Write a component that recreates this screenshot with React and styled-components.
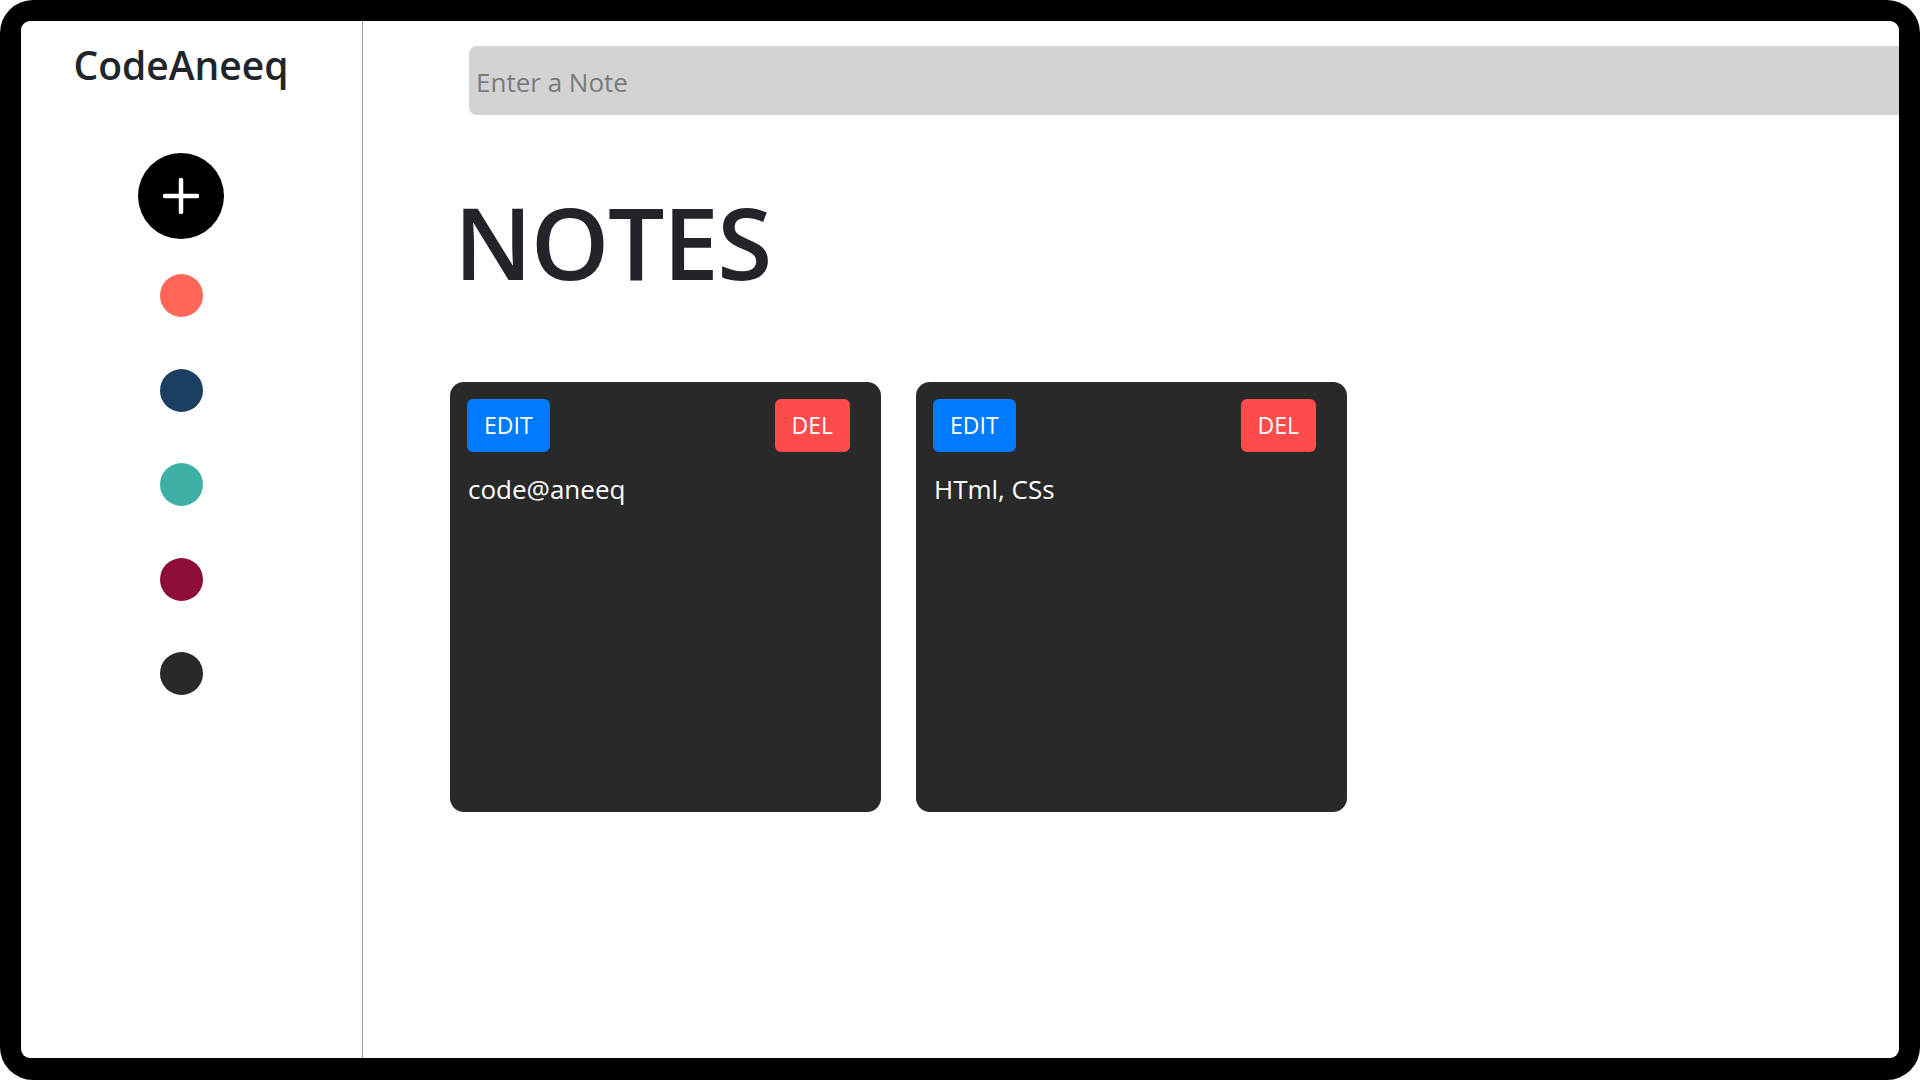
import React from "react";
import styled, { createGlobalStyle } from "styled-components";

const GlobalStyle = createGlobalStyle`
  html, body {
    margin: 0;
    padding: 0;
    background: #ffffff;
  }
  * { box-sizing: border-box; }
  body {
    font-family: "Open Sans", "Noto Sans", "Liberation Sans", sans-serif;
  }
`;

const Frame = styled.div`
  width: 1920px;
  height: 1080px;
  background: #000000;
  border-radius: 33px;
  padding: 21px 21px 22px 21px;
`;

const Screen = styled.div`
  display: flex;
  height: 100%;
  background: #ffffff;
  border-radius: 9px;
  overflow: hidden;
`;

const Sidebar = styled.aside`
  flex: 0 0 342px;
  display: flex;
  flex-direction: column;
  align-items: center;
  padding: 24px 21px 0 0;
  border-right: 1px solid #9a9a9a;
`;

const Logo = styled.h2`
  margin: 0;
  font-size: 39px;
  font-weight: 600;
  line-height: 1;
  color: #212529;
`;

const AddButton = styled.button`
  width: 86px;
  height: 86px;
  margin-top: 69px;
  border: none;
  border-radius: 50%;
  background: #000000;
  display: flex;
  align-items: center;
  justify-content: center;
  padding: 0;
  cursor: pointer;
`;

const DotList = styled.div`
  display: flex;
  flex-direction: column;
  gap: 51.5px;
  margin-top: 35px;
`;

const Dot = styled.span`
  display: block;
  width: 43px;
  height: 43px;
  border-radius: 50%;
  background: ${(p) => p.$color};
`;

const Main = styled.main`
  flex: 1;
  min-width: 0;
  display: flex;
  flex-direction: column;
  padding: 25px 0 0 87px;
  overflow: hidden;
`;

const NoteInput = styled.input`
  flex: 0 0 auto;
  width: 1500px;
  height: 69px;
  margin-left: 19px;
  border: none;
  outline: none;
  border-radius: 8px;
  background: #d3d3d3;
  padding: 3px 0 0 7px;
  font-family: inherit;
  font-size: 26px;
  color: #212529;
  &::placeholder {
    color: #7a7a7a;
  }
`;

const Heading = styled.h1`
  margin: 76px 0 0 4px;
  font-size: 100px;
  font-weight: 600;
  line-height: 1;
  letter-spacing: -1.5px;
  color: #212529;
`;

const CardRow = styled.div`
  display: flex;
  gap: 35px;
  margin-top: 91px;
`;

const Card = styled.div`
  width: 431px;
  height: 430px;
  background: #292929;
  border-radius: 14px;
  padding: 17px 31px 17px 17px;
  display: flex;
  flex-direction: column;
`;

const CardActions = styled.div`
  display: flex;
  justify-content: space-between;
  align-items: center;
`;

const ActionButton = styled.button`
  height: 53px;
  padding: 0 17px;
  border: none;
  border-radius: 6px;
  background: ${(p) => (p.$danger ? "#ff4b4b" : "#007bff")};
  color: #ffffff;
  font-family: inherit;
  font-size: 23px;
  line-height: 1;
  cursor: pointer;
`;

const NoteText = styled.p`
  margin: 18px 0 0 1px;
  font-size: 26px;
  line-height: 1.5;
  color: #ffffff;
`;

const PlusIcon = () => (
  <svg width="36" height="36" viewBox="0 0 36 36" aria-hidden="true">
    <path d="M18 2v32M2 18h32" stroke="#ffffff" strokeWidth="4.5" strokeLinecap="round" />
  </svg>
);

const colors = ["#ff6657", "#1a3f61", "#3db0a6", "#8e0c3b", "#292929"];
const notes = ["code@aneeq", "HTml, CSs"];

export default function App() {
  return (
    <>
      <GlobalStyle />
      <Frame>
        <Screen>
          <Sidebar>
            <Logo>CodeAneeq</Logo>
            <AddButton aria-label="Add note">
              <PlusIcon />
            </AddButton>
            <DotList>
              {colors.map((c) => (
                <Dot key={c} $color={c} />
              ))}
            </DotList>
          </Sidebar>
          <Main>
            <NoteInput placeholder="Enter a Note" />
            <Heading>NOTES</Heading>
            <CardRow>
              {notes.map((n) => (
                <Card key={n}>
                  <CardActions>
                    <ActionButton>EDIT</ActionButton>
                    <ActionButton $danger>DEL</ActionButton>
                  </CardActions>
                  <NoteText>{n}</NoteText>
                </Card>
              ))}
            </CardRow>
          </Main>
        </Screen>
      </Frame>
    </>
  );
}
